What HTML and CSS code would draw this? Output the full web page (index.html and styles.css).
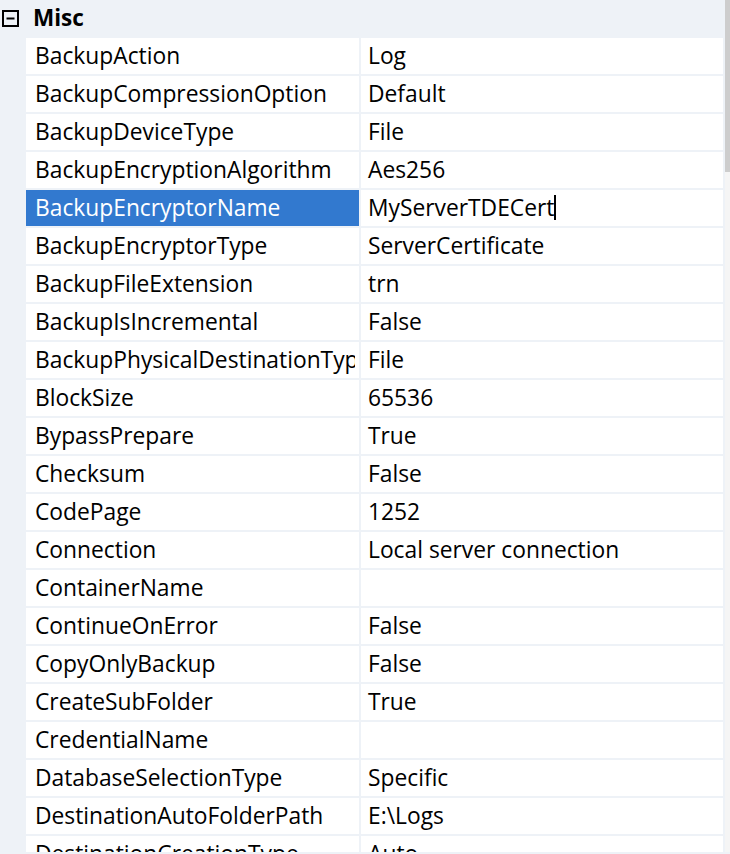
FILE: index.html
```html
<!DOCTYPE html>
<html>
<head>
<meta charset="utf-8">
<link rel="stylesheet" href="styles.css">
</head>
<body>
<div class="frame">
  <div class="grid">
    <div class="cat">
      <svg class="toggle" width="17" height="17" viewBox="0 0 17 17"><rect x="1" y="1" width="15" height="15" fill="none" stroke="#000" stroke-width="2"/><rect x="4.5" y="7.5" width="8" height="2" fill="#000"/></svg>
      <span class="cat-label">Misc</span>
    </div>
    <div class="row"><div class="name"><span class="clip">BackupAction</span></div><div class="val">Log</div></div>
    <div class="row"><div class="name"><span class="clip">BackupCompressionOption</span></div><div class="val">Default</div></div>
    <div class="row"><div class="name"><span class="clip">BackupDeviceType</span></div><div class="val">File</div></div>
    <div class="row"><div class="name"><span class="clip">BackupEncryptionAlgorithm</span></div><div class="val">Aes256</div></div>
    <div class="row"><div class="name sel"><span class="clip">BackupEncryptorName</span></div><div class="val">MyServerTDECert<span class="caret"></span></div></div>
    <div class="row"><div class="name"><span class="clip">BackupEncryptorType</span></div><div class="val">ServerCertificate</div></div>
    <div class="row"><div class="name"><span class="clip">BackupFileExtension</span></div><div class="val">trn</div></div>
    <div class="row"><div class="name"><span class="clip">BackupIsIncremental</span></div><div class="val">False</div></div>
    <div class="row"><div class="name"><span class="clip">BackupPhysicalDestinationType</span></div><div class="val">File</div></div>
    <div class="row"><div class="name"><span class="clip">BlockSize</span></div><div class="val">65536</div></div>
    <div class="row"><div class="name"><span class="clip">BypassPrepare</span></div><div class="val">True</div></div>
    <div class="row"><div class="name"><span class="clip">Checksum</span></div><div class="val">False</div></div>
    <div class="row"><div class="name"><span class="clip">CodePage</span></div><div class="val">1252</div></div>
    <div class="row"><div class="name"><span class="clip">Connection</span></div><div class="val">Local server connection</div></div>
    <div class="row"><div class="name"><span class="clip">ContainerName</span></div><div class="val"></div></div>
    <div class="row"><div class="name"><span class="clip">ContinueOnError</span></div><div class="val">False</div></div>
    <div class="row"><div class="name"><span class="clip">CopyOnlyBackup</span></div><div class="val">False</div></div>
    <div class="row"><div class="name"><span class="clip">CreateSubFolder</span></div><div class="val">True</div></div>
    <div class="row"><div class="name"><span class="clip">CredentialName</span></div><div class="val"></div></div>
    <div class="row"><div class="name"><span class="clip">DatabaseSelectionType</span></div><div class="val">Specific</div></div>
    <div class="row"><div class="name"><span class="clip">DestinationAutoFolderPath</span></div><div class="val">E:\Logs</div></div>
    <div class="row"><div class="name"><span class="clip">DestinationCreationType</span></div><div class="val">Auto</div></div>
  </div>
  <div class="scroll"><div class="thumb"></div></div>
</div>
</body>
</html>
```
FILE: styles.css
```css
html, body {
  margin: 0;
  padding: 0;
  background: #eef2f7;
  overflow: hidden;
}
.frame {
  display: flex;
  width: 730px;
  height: 852px;
  overflow: hidden;
  border-bottom: 2px solid #eef2f7;
  font-family: "Open Sans", "Noto Sans", sans-serif;
  font-size: 22.8px;
  color: #000;
}
.grid {
  width: 723px;
  display: flex;
  flex-direction: column;
  gap: 2px;
}
.cat {
  height: 36px;
  display: flex;
  align-items: center;
  flex-shrink: 0;
}
.toggle {
  margin-left: 2px;
  margin-right: 14px;
}
.cat-label {
  font-weight: 700;
  font-size: 22.5px;
  padding-bottom: 2px;
}
.row {
  display: flex;
  height: 36px;
  flex-shrink: 0;
  margin-left: 26px;
  gap: 2px;
}
.name, .val {
  background: #fff;
  display: flex;
  align-items: center;
  white-space: nowrap;
  overflow: hidden;
  padding-bottom: 2px;
  box-sizing: border-box;
}
.name {
  width: 333px;
  flex-shrink: 0;
  padding-left: 9px;
}
.clip {
  display: block;
  max-width: 320px;
  overflow: hidden;
}
.val {
  flex: 1;
  padding-left: 7px;
}
.sel {
  background: #3279cf;
  color: #fff;
}
.caret {
  display: inline-block;
  width: 2px;
  height: 25px;
  background: #000;
}
.scroll {
  width: 5px;
  margin-left: 2px;
  background: #f5f5f5;
  height: 854px;
}
.thumb {
  height: 172px;
  background: #cdcdcd;
}
```
